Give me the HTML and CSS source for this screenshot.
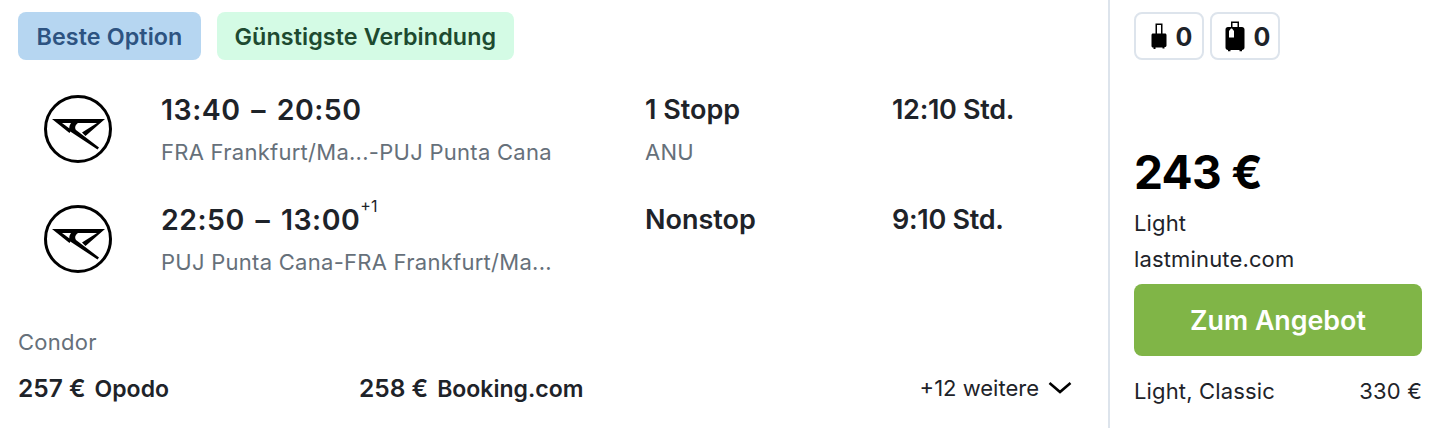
FILE: index.html
```html
<!DOCTYPE html>
<html lang="de">
<head>
<meta charset="utf-8">
<title>Flugangebot</title>
<link rel="stylesheet" href="styles.css">
</head>
<body>
<svg class="defs" width="0" height="0" aria-hidden="true">
  <symbol id="condor" viewBox="0 0 68 68">
    <circle cx="34" cy="34" r="32.500" fill="none" stroke="#000" stroke-width="3"/>
    <path fill="#000" d="M8 24H61L41.500 41L38 37.500L53 28H34C31 30 30.500 33 32 35L55 52.500L53.500 54.500L27 37C24.500 34 25 31 27 28H18L27.500 35L25.500 38Z"/>
  </symbol>
</svg>
<main class="card">
  <section class="left">
    <div class="badges">
      <span class="badge badge-blue">Beste Option</span>
      <span class="badge badge-green">Günstigste Verbindung</span>
    </div>
    <div class="flights">
      <div class="flight">
        <svg class="logo"><use href="#condor"/></svg>
        <div class="times">
          <div class="time">13:40 – 20:50</div>
          <div class="sub">FRA Frankfurt/Ma...-PUJ Punta Cana</div>
        </div>
        <div class="stops">
          <div class="strong">1 Stopp</div>
          <div class="sub">ANU</div>
        </div>
        <div class="strong duration">12:10 Std.</div>
      </div>
      <div class="flight">
        <svg class="logo"><use href="#condor"/></svg>
        <div class="times">
          <div class="time">22:50 – 13:00<sup class="plus">+1</sup></div>
          <div class="sub">PUJ Punta Cana-FRA Frankfurt/Ma...</div>
        </div>
        <div class="stops">
          <div class="strong">Nonstop</div>
        </div>
        <div class="strong duration">9:10 Std.</div>
      </div>
    </div>
    <div class="airline">Condor</div>
    <div class="others">
      <div class="other"><b class="other-price">257 €</b><b class="other-name">Opodo</b></div>
      <div class="other"><b class="other-price">258 €</b><b class="other-name">Booking.com</b></div>
      <div class="more">+12 weitere
        <svg class="chev" width="24" height="14" viewBox="0 0 24 14"><path d="M1.500 2L12 11L22.500 2" fill="none" stroke="#000" stroke-width="2.600"/></svg>
      </div>
    </div>
  </section>
  <aside class="right">
    <div class="bags">
      <div class="bag">
        <svg width="16" height="28" viewBox="0 0 16 28"><path fill="#000" fill-rule="evenodd" d="M4.500 1.500h7v10H14c.9 0 1.500.6 1.500 1.500v10.500c0 .9-.6 1.500-1.500 1.500h-.5v1.500h-2V25.500h-7V27h-2v-1.500H2c-.9 0-1.500-.6-1.500-1.500V13c0-.9.6-1.500 1.500-1.500h2.500zm1.500 1.500v8.500h4V3z"/></svg>
        <span>0</span>
      </div>
      <div class="bag">
        <svg width="20" height="32" viewBox="0 0 20 32"><path fill="#000" fill-rule="evenodd" d="M6 1.500h8v5.500h3c1.400 0 2.500 1 2.500 2.500v18c0 1.500-1.100 2.500-2.500 2.500v1.200h-2.500V30H5.500v1.200H3V30c-1.500 0-2.500-1-2.500-2.500v-18C.5 8 1.500 7 3 7h3zm1.500 1.500V7h5V3z"/><path fill="#fff" d="M4 11l2-2.500h1L9 11v6.500H4z"/></svg>
        <span>0</span>
      </div>
    </div>
    <div class="price">243 €</div>
    <div class="fare">Light</div>
    <div class="seller">lastminute.com</div>
    <button class="cta" type="button">Zum Angebot</button>
    <div class="alt"><span>Light, Classic</span><span>330 €</span></div>
  </aside>
</main>
</body>
</html>
```
FILE: styles.css
```css
* { box-sizing: border-box; }
html, body { margin: 0; padding: 0; background: #fff; }
body { width: 1438px; height: 428px; overflow: hidden; font-family: Inter, "Noto Sans", "Liberation Sans", sans-serif; color: #1e2329; }
.defs { position: absolute; }
.card { display: flex; height: 428px; }
.left { width: 1110px; padding: 12px 36px 0 18px; border-right: 2px solid #dde4ec; }
.badges { display: flex; gap: 16px; }
.badge { height: 48px; display: flex; align-items: center; border-radius: 8px; font-size: 23.300px; font-weight: 600; letter-spacing: .1px; }
.badge-blue { padding: 0 18.500px; background: #b6d6f1; color: #2d5381; }
.badge-green { padding: 0 17.500px; background: #d4fbe5; color: #1d4a30; }
.flights { margin-top: 18px; }
.flight { display: flex; height: 110px; padding-top: 16px; }
.logo { width: 68px; height: 68px; margin: 1px 49px 0 26px; flex: none; }
.times { width: 484px; flex: none; }
.stops { width: 247px; flex: none; }
.strong { font-size: 27px; font-weight: 600; line-height: 32px; white-space: nowrap; }
.time { font-size: 28.500px; font-weight: 600; line-height: 32px; letter-spacing: .5px; word-spacing: 3px; white-space: nowrap; }
.duration { letter-spacing: -.3px; }
.sub { font-size: 22px; letter-spacing: .27px; line-height: 28px; margin-top: 12px; color: #66707a; white-space: nowrap; }
.plus { font-size: 16px; font-weight: 400; line-height: 0; letter-spacing: 0; vertical-align: 18px; }
.airline { margin-top: 30px; font-size: 22px; letter-spacing: .27px; line-height: 28px; color: #66707a; }
.others { display: flex; align-items: center; margin-top: 18px; height: 28px; }
.other { width: 341px; font-size: 23px; white-space: nowrap; }
.other-price { font-weight: 600; font-size: 24.500px; margin-right: 9px; }
.other-name { font-weight: 600; }
.more { margin-left: auto; font-size: 22px; display: flex; align-items: center; gap: 9px; }
.right { flex: 1; padding: 12px 16px 0 24px; }
.bags { display: flex; gap: 6px; }
.bag { width: 70px; height: 48px; padding-left: 5px; border: 2px solid #dde4ec; border-radius: 8px; display: flex; align-items: center; justify-content: center; gap: 9px; font-size: 25px; font-weight: 700; line-height: 1; color: #1e2329; }
.bag span { margin-top: 2px; }
.price { margin-top: 86px; font-size: 46px; font-weight: 700; line-height: 52px; color: #000; letter-spacing: -.7px; }
.fare { margin-top: 7px; font-size: 22px; line-height: 36px; letter-spacing: .15px; }
.seller { font-size: 22px; line-height: 36px; letter-spacing: .15px; }
.cta { display: block; width: 100%; height: 72px; margin-top: 7px; border: 0; border-radius: 8px; background: #80b547; color: #fff; font: 600 26.800px Inter, sans-serif; }
.alt { display: flex; justify-content: space-between; margin-top: 17px; font-size: 22px; line-height: 36px; letter-spacing: .15px; }
```
